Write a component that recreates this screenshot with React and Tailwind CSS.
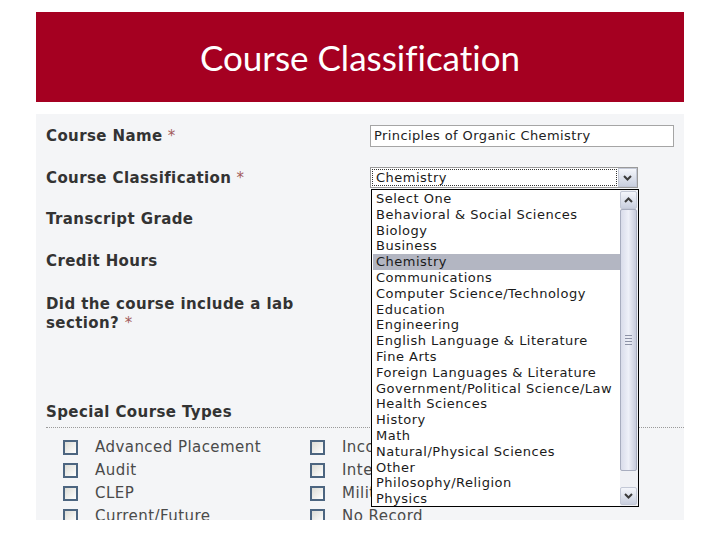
import React from "react"

const options = [
  "Select One",
  "Behavioral & Social Sciences",
  "Biology",
  "Business",
  "Chemistry",
  "Communications",
  "Computer Science/Technology",
  "Education",
  "Engineering",
  "English Language & Literature",
  "Fine Arts",
  "Foreign Languages & Literature",
  "Government/Political Science/Law",
  "Health Sciences",
  "History",
  "Math",
  "Natural/Physical Sciences",
  "Other",
  "Philosophy/Religion",
  "Physics",
]

const leftTypes = ["Advanced Placement", "Audit", "CLEP", "Current/Future"]
const rightTypes = ["Incomplete", "International", "Military", "No Record"]

function Chevron({ up }) {
  return (
    <svg width="9" height="6" viewBox="0 0 9 6" className="block">
      <path
        d={up ? "M1 5 L4.5 1.5 L8 5" : "M1 1 L4.5 4.5 L8 1"}
        fill="none"
        stroke="#3b3b3b"
        strokeWidth="2"
      />
    </svg>
  )
}

function ScrollButton({ up }) {
  return (
    <div className="h-[18px] flex items-center justify-center border border-[#c3c8d6] rounded-[2px] bg-gradient-to-b from-[#f4f6fb] to-[#c9cfdf]">
      <Chevron up={up} />
    </div>
  )
}

function Checkbox() {
  return <div className="w-[15px] h-[15px] shrink-0 border-2 border-[#4c6580] bg-gradient-to-br from-[#dcdcd6] to-[#ffffff]" />
}

function Label({ children, required }) {
  return (
    <div className="font-bold text-[15px] leading-[19px] tracking-[0.4px] text-[#333]">
      {children}
      {required && <span className="font-normal text-[#a35b5b]"> *</span>}
    </div>
  )
}

function Dropdown() {
  return (
    <div className="absolute left-[335px] top-[75px] w-[268px] h-[318px] bg-white border border-black flex">
      <div className="flex-1 pt-[1px] pl-[1px]">
        {options.map(o => (
          <div
            key={o}
            className={
              "pl-[3px] h-[15.8px] leading-[15.8px] text-[13px] tracking-[0.5px] text-[#1a1a1a] whitespace-nowrap " +
              (o === "Chemistry" ? "bg-[#b3b6c2]" : "")
            }
          >
            {o}
          </div>
        ))}
      </div>
      <div className="w-[18px] flex flex-col bg-[#f0f1f5] pt-[1px] pb-[1px] pr-[1px]">
        <ScrollButton up />
        <div className="h-[262px] border border-[#a8adbf] rounded-[2px] bg-gradient-to-r from-[#d9dcea] via-[#eef0f8] to-[#c7cbdc] flex items-center justify-center">
          <div className="flex flex-col gap-[2px]">
            <div className="w-[7px] h-[1px] bg-[#8d92a6]" />
            <div className="w-[7px] h-[1px] bg-[#8d92a6]" />
            <div className="w-[7px] h-[1px] bg-[#8d92a6]" />
            <div className="w-[7px] h-[1px] bg-[#8d92a6]" />
          </div>
        </div>
        <div className="flex-1" />
        <ScrollButton />
      </div>
    </div>
  )
}

export default function App() {
  return (
    <div className="w-[720px] h-[540px] bg-white pt-[12px] px-[36px] overflow-hidden font-['DejaVu_Sans',Verdana,sans-serif]">
      <div className="h-[90px] bg-[#a50021] flex items-center justify-center">
        <h1 className="text-white text-[35px] font-['Lato',sans-serif] font-normal [font-variant-ligatures:none]">
          Course Classification
        </h1>
      </div>

      <div className="relative mt-[12px] h-[406px] bg-[#f4f5f7] pt-[11px] overflow-hidden">
        <div className="flex h-[42px] pl-[10px]">
          <div className="w-[324px] pt-[2px]"><Label required>Course Name</Label></div>
          <div className="w-[304px] h-[22px] bg-white border border-[#a5a5a5] px-[3px] text-[13px] leading-[20px] tracking-[0.4px] text-[#222]">
            Principles of Organic Chemistry
          </div>
        </div>
        <div className="flex h-[42px] pl-[10px]">
          <div className="w-[324px] pt-[2px]"><Label required>Course Classification</Label></div>
          <div className="w-[268px] h-[21px] bg-white border border-[#9a9a9a] flex">
            <div className="flex-1 m-[1px] border border-dotted border-[#333] px-[3px] text-[13px] leading-[15px] tracking-[0.5px] text-[#1a1a1a]">
              Chemistry
            </div>
            <div className="w-[19px] flex items-center justify-center border border-[#c3c8d6] bg-gradient-to-b from-[#f4f6fb] to-[#c9cfdf]">
              <Chevron />
            </div>
          </div>
        </div>
        <div className="h-[42px] pl-[10px] pt-[1px]"><Label>Transcript Grade</Label></div>
        <div className="h-[42px] pl-[10px] pt-[1px]"><Label>Credit Hours</Label></div>
        <div className="h-[109px] pl-[10px] pt-[2px]">
          <Label>Did the course include a lab<br />section? <span className="font-normal text-[#a35b5b]">*</span></Label>
        </div>
        <div className="ml-[10px] h-[26px] pt-[1px] border-b border-dotted border-[#9a9a9a]">
          <Label>Special Course Types</Label>
        </div>
        <div className="flex pt-[8px]">
          <div className="w-[274px] pl-[27px] flex flex-col">
            {leftTypes.map(t => (
              <div key={t} className="h-[23px] flex items-center gap-[17px] text-[15px] tracking-[0.45px] text-[#4a4a4a] whitespace-nowrap">
                <Checkbox />
                <span>{t}</span>
              </div>
            ))}
          </div>
          <div className="flex flex-col">
            {rightTypes.map(t => (
              <div key={t} className="h-[23px] flex items-center gap-[17px] text-[15px] tracking-[0.45px] text-[#4a4a4a] whitespace-nowrap">
                <Checkbox />
                <span>{t}</span>
              </div>
            ))}
          </div>
        </div>
        <Dropdown />
      </div>
    </div>
  )
}
